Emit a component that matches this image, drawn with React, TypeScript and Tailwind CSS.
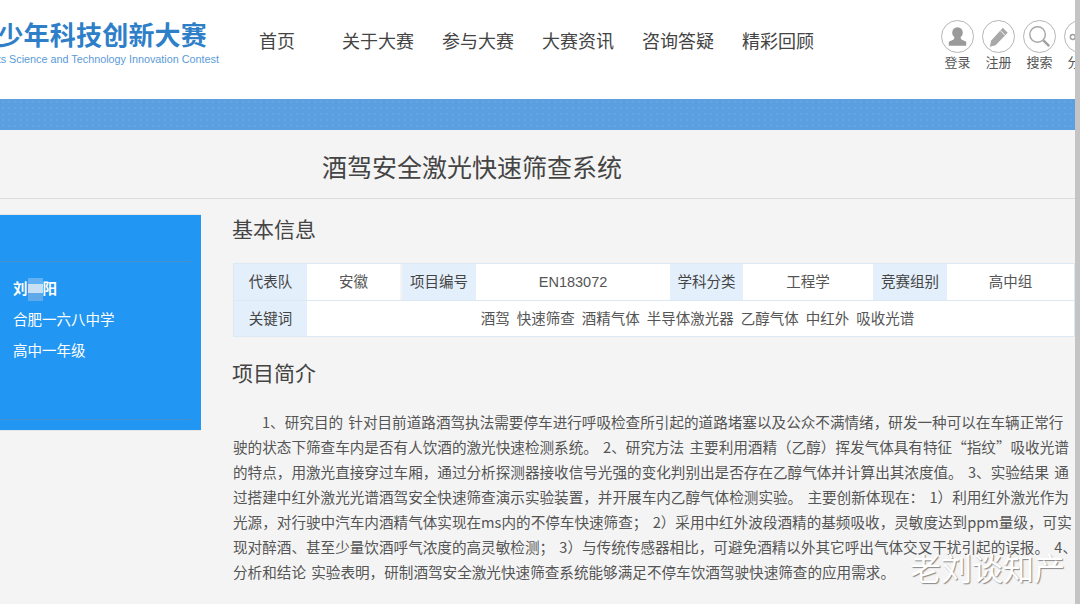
import type { ReactNode } from "react";

const navItems = ["关于大赛", "参与大赛", "大赛资讯", "咨询答疑", "精彩回顾"];

function UserIcon() {
  return (
    <svg viewBox="0 0 32 32" className="w-[32px] h-[32px]">
      <circle cx="16" cy="11.5" r="5.5" fill="#9a9a9a" />
      <path d="M13 16 L19 16 L20 18.5 L25 21 L25 25 L7 25 L7 21 L12 18.5 Z" fill="#9a9a9a" />
    </svg>
  );
}

function PencilIcon() {
  return (
    <svg viewBox="0 0 32 32" className="w-[32px] h-[32px]">
      <path d="M20.5 6.5 L25.5 11.5 L13 24.5 L7 26 L8.5 19.5 Z" fill="#a8a8a8" />
      <path d="M18 9.5 L22.5 14" stroke="#fff" strokeWidth="1" />
    </svg>
  );
}

function SearchIcon() {
  return (
    <svg viewBox="0 0 32 32" className="w-[32px] h-[32px]" fill="none">
      <circle cx="14" cy="13.5" r="8" stroke="#a8a8a8" strokeWidth="1.5" />
      <path d="M20 19.5 L26 25.5" stroke="#a0a0a0" strokeWidth="2.5" />
    </svg>
  );
}

function ShareIcon() {
  return (
    <svg viewBox="0 0 32 32" className="w-[32px] h-[32px]" fill="none">
      <circle cx="8" cy="16" r="2.5" stroke="#a0a0a0" strokeWidth="1.5" />
      <circle cx="23" cy="9" r="2.5" stroke="#a0a0a0" strokeWidth="1.5" />
      <circle cx="23" cy="23" r="2.5" stroke="#a0a0a0" strokeWidth="1.5" />
      <path d="M10.5 15 L20.5 10 M10.5 17 L20.5 22" stroke="#a0a0a0" strokeWidth="1.5" />
    </svg>
  );
}

function HeaderAction({ icon, label }: { icon: ReactNode; label: string }) {
  return (
    <div className="flex flex-col items-center w-[33px] shrink-0">
      <div className="w-[33px] h-[33px] rounded-full border border-[#b5b5b5] flex items-center justify-center shrink-0 overflow-hidden">
        {icon}
      </div>
      <span className="text-[13px] leading-[18px] mt-[1px] text-[#555] whitespace-nowrap">{label}</span>
    </div>
  );
}

function Label({ children, className = "" }: { children: ReactNode; className?: string }) {
  return (
    <div className={`bg-[#e3effb] flex items-center justify-center pt-[2px] text-[#444] text-[14.5px] ${className}`}>
      {children}
    </div>
  );
}

function Value({ children, className = "" }: { children: ReactNode; className?: string }) {
  return (
    <div className={`bg-white flex items-center justify-center pt-[2px] text-[#555] text-[14.5px] ${className}`}>
      {children}
    </div>
  );
}

export default function App() {
  return (
    <div className="w-[1080px] h-[604px] overflow-hidden relative bg-[#f4f4f4] font-['Liberation_Sans','Noto_Sans_CJK_SC',sans-serif]">
      <div className="flex flex-col w-[1075px] h-full">
        <header className="h-[99px] bg-white flex shrink-0 overflow-hidden">
          <div className="w-[220px] shrink-0 flex flex-col items-end pt-[21px] overflow-hidden">
            <div className="whitespace-nowrap text-[#2f7fc8] text-[26px] leading-[30px] font-bold tracking-[0.2px] pr-[13px]">少年科技创新大赛</div>
            <div className="whitespace-nowrap text-[#5b9bd8] text-[10.8px] leading-[14px] mt-[1px] pr-[1px]">ts Science and Technology Innovation Contest</div>
          </div>
          <nav className="flex items-start ml-[39px] pt-[29px] text-[18px] leading-[26px] text-[#444]">
            <span className="w-[83px]">首页</span>
            <div className="flex gap-[28px]">
              {navItems.map((item) => (
                <span key={item} className="whitespace-nowrap">{item}</span>
              ))}
            </div>
          </nav>
          <div className="flex gap-[8px] ml-[127px] pt-[20px]">
            <HeaderAction icon={<UserIcon />} label="登录" />
            <HeaderAction icon={<PencilIcon />} label="注册" />
            <HeaderAction icon={<SearchIcon />} label="搜索" />
            <HeaderAction icon={<ShareIcon />} label="分享" />
          </div>
        </header>

        <div className="h-[31px] shrink-0 bg-[#5b9fe0] bg-[radial-gradient(#64a5e3_1px,transparent_1px)] bg-[size:6px_6px]" />

        <div className="h-[69px] shrink-0 border-b border-[#dcdcdc] pl-[322px] pt-[10px] flex items-center text-[25px] text-[#444]">
          酒驾安全激光快速筛查系统
        </div>

        <div className="flex mt-[15px]">
          <aside className="w-[201px] h-[217px] shrink-0 bg-[#2196f3] border-y border-[#e6e6e6] text-white flex flex-col">
            <div className="h-[47px] mr-[10px] border-b border-[#4a90c8]" />
            <div className="flex-1 pl-[13px] pt-[12px] text-[14.5px] leading-[31px]">
              <div className="flex items-center font-bold">
                刘
                <span className="w-[15px] h-[23px] flex flex-col shrink-0" aria-hidden>
                  <span className="h-[6px] bg-[#63b0f2]" />
                  <span className="h-[9px] bg-[#c9dff3]" />
                  <span className="h-[8px] bg-[#5fa9ea]" />
                </span>
                阳
              </div>
              <div>合肥一六八中学</div>
              <div>高中一年级</div>
            </div>
            <div className="h-[11px] mr-[10px] border-t border-[#4a90c8]" />
          </aside>

          <main className="ml-[32px] w-[842px] min-w-0">
            <h2 className="-ml-[1px] pt-[1px] text-[21px] leading-[30px] text-[#444]">基本信息</h2>
            <div className="mt-[18px] border border-[#dce8f2] bg-[#dce8f2] flex flex-col gap-[1px]">
              <div className="flex h-[36px]">
                <Label className="w-[73px]">代表队</Label>
                <Value className="w-[95px] border-r-2 border-[#f4f4f4]">安徽</Value>
                <Label className="w-[74px]">项目编号</Label>
                <Value className="w-[194px]">EN183072</Value>
                <Label className="w-[73px]">学科分类</Label>
                <Value className="w-[130px]">工程学</Value>
                <Label className="w-[74px]">竞赛组别</Label>
                <Value className="flex-1">高中组</Value>
              </div>
              <div className="flex h-[35px]">
                <Label className="w-[73px]">关键词</Label>
                <Value className="flex-1 pl-[14px] [word-spacing:3px]">酒驾 快速筛查 酒精气体 半导体激光器 乙醇气体 中红外 吸收光谱</Value>
              </div>
            </div>
            <h2 className="-ml-[1px] mt-[21px] pt-[1px] text-[21px] leading-[30px] text-[#444]">项目简介</h2>
            <p className="mt-[20px] font-['Noto_Sans_CJK_SC',sans-serif] text-[14.6px] leading-[25px] text-[#555] indent-[29px] [word-spacing:2px]">
              1、研究目的 针对目前道路酒驾执法需要停车进行呼吸检查所引起的道路堵塞以及公众不满情绪，研发一种可以在车辆正常行驶的状态下筛查车内是否有人饮酒的激光快速检测系统。 2、研究方法 主要利用酒精（乙醇）挥发气体具有特征“指纹”吸收光谱的特点，用激光直接穿过车厢，通过分析探测器接收信号光强的变化判别出是否存在乙醇气体并计算出其浓度值。 3、实验结果 通过搭建中红外激光光谱酒驾安全快速筛查演示实验装置，并开展车内乙醇气体检测实验。 主要创新体现在： 1）利用红外激光作为光源，对行驶中汽车内酒精气体实现在ms内的不停车快速筛查； 2）采用中红外波段酒精的基频吸收，灵敏度达到ppm量级，可实现对醉酒、甚至少量饮酒呼气浓度的高灵敏检测； 3）与传统传感器相比，可避免酒精以外其它呼出气体交叉干扰引起的误报。 4<span className="tracking-[-8px]">、</span>分析和结论 实验表明，研制酒驾安全激光快速筛查系统能够满足不停车饮酒驾驶快速筛查的应用需求。
            </p>
          </main>
        </div>
      </div>

      <div className="absolute right-0 top-0 bottom-0 w-[5px] bg-[#c4c4c4]" />
      <div className="absolute left-[910px] top-[552px] text-[31px] leading-[36px] text-white [text-shadow:1px_1px_1px_#888] whitespace-nowrap">老刘谈知产</div>
    </div>
  );
}
